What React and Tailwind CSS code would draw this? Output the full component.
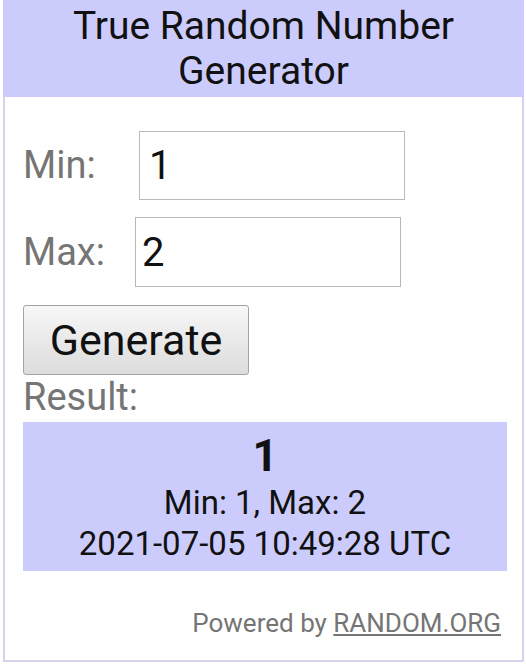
export default function App() {
  return (
    <div className="w-[526px] h-[664px] bg-white font-['Roboto',sans-serif]">
      <div className="ml-[3px] w-[521px] h-[662px] border-x-2 border-b-2 border-[#d3d3ec] flex flex-col">
        {/* header */}
        <div className="-mx-[2px] h-[97px] bg-[#ccccfc] flex items-center justify-center text-center text-[39px] leading-[45px] text-[#111]">
          True Random Number
          <br />
          Generator
        </div>

        <div className="pl-[18px] pr-[15px] flex flex-col">
          <div className="mt-[34px] flex items-center">
            <span className="w-[116px] text-[38px] text-[#757575]">Min:</span>
            <input
              defaultValue="1"
              className="w-[266px] h-[69px] border border-[#b8b8b8] px-[9px] text-[40px] text-[#111] outline-none"
            />
          </div>
          <div className="mt-[17px] flex items-center">
            <span className="w-[112px] text-[38px] text-[#757575]">Max:</span>
            <input
              defaultValue="2"
              className="w-[266px] h-[70px] border border-[#b8b8b8] px-[6px] text-[40px] text-[#111] outline-none"
            />
          </div>
          <button className="mt-[18px] w-[226px] h-[70px] rounded-[3px] border border-[#a4a4a4] bg-gradient-to-b from-[#f7f7f7] to-[#dcdcdc] text-[43px] text-[#111]">
            Generate
          </button>
          <div className="h-[47px] leading-[45px] text-[38px] text-[#757575]">Result:</div>
          <div className="w-[484px] h-[149px] pt-[8px] bg-[#ccccfc] flex flex-col items-center text-[#111]">
            <div className="text-[44px] font-bold leading-[52px]">1</div>
            <div className="text-[33px] leading-[41px]">Min: 1, Max: 2</div>
            <div className="text-[33px] leading-[41px]">2021-07-05 10:49:28 UTC</div>
          </div>
          <div className="mt-[33px] pr-[6px] text-right text-[26px] text-[#757575]">
            Powered by <a className="underline">RANDOM.ORG</a>
          </div>
        </div>
      </div>
    </div>
  );
}
